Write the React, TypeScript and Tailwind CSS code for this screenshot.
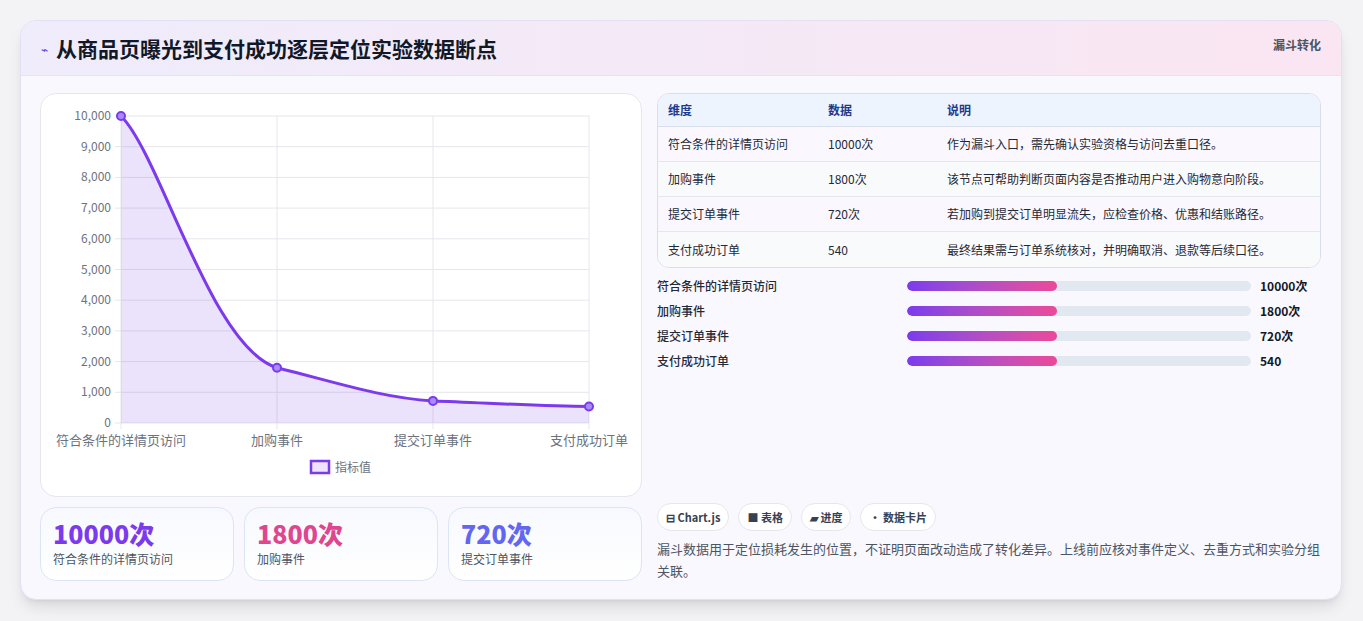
import React from "react";

const F = { fontFamily: '"Noto Sans CJK SC", "Noto Sans", sans-serif' };

const rows = [
  ["符合条件的详情页访问", "10000次", "作为漏斗入口，需先确认实验资格与访问去重口径。"],
  ["加购事件", "1800次", "该节点可帮助判断页面内容是否推动用户进入购物意向阶段。"],
  ["提交订单事件", "720次", "若加购到提交订单明显流失，应检查价格、优惠和结账路径。"],
  ["支付成功订单", "540", "最终结果需与订单系统核对，并明确取消、退款等后续口径。"],
];

function Chart() {
  const X0 = 80, X1 = 548, Y0 = 22, Y1 = 329;
  const yv = (v: number) => Y1 - (v / 10000) * (Y1 - Y0);
  const xs = [80, 236, 392, 548];
  const vals = [10000, 1800, 720, 540];
  const ys = vals.map(yv);
  const line = `M${xs[0]},${ys[0]} C120,${ys[0] + 40} 170,${ys[1] - 20} ${xs[1]},${ys[1]} C290,${ys[2] - 20} 340,${ys[2] - 3} ${xs[2]},${ys[2]} C440,${ys[3] - 4} 500,${ys[3]} ${xs[3]},${ys[3]}`;
  const ticks = [0, 1000, 2000, 3000, 4000, 5000, 6000, 7000, 8000, 9000, 10000];
  return (
    <svg width="600" height="401" className="block">
      {ticks.map((t) => (
        <g key={t}>
          <line x1={X0 - 6} x2={X1} y1={yv(t)} y2={yv(t)} stroke="#e5e7eb" />
          <text x={X0 - 10} y={yv(t) + 4} textAnchor="end" fontSize="12" fill="#6b7280" style={F}>
            {t.toLocaleString("en-US")}
          </text>
        </g>
      ))}
      {xs.map((x) => (
        <line key={x} x1={x} x2={x} y1={Y0} y2={Y1 + 6} stroke="#e5e7eb" />
      ))}
      <path d={`${line} L${X1},${Y1} L${X0},${Y1} Z`} fill="#7c3aed" fillOpacity="0.15" />
      <path d={line} fill="none" stroke="#7c3aed" strokeWidth="3" />
      {xs.map((x, i) => (
        <circle key={x} cx={x} cy={ys[i]} r="4" fill="#a78bfa" stroke="#7c3aed" strokeWidth="2" />
      ))}
      {["符合条件的详情页访问", "加购事件", "提交订单事件", "支付成功订单"].map((l, i) => (
        <text key={l} x={xs[i]} y={351} textAnchor="middle" fontSize="13" fill="#6b7280" style={F}>
          {l}
        </text>
      ))}
      <rect x="270" y="367" width="18" height="12" fill="#ede4fb" stroke="#7c3aed" strokeWidth="2.5" />
      <text x="294" y="378" fontSize="12" fill="#6b7280" style={F}>指标值</text>
    </svg>
  );
}

export default function App() {
  return (
    <div className="min-h-[621px] bg-[#f3f3f6] pt-5 px-5" style={F}>
      <div className="w-[1322px] h-[580px] rounded-2xl bg-[#f9f8fe] border border-[#e2e0f3] overflow-hidden shadow-lg">
        <div className="h-[55px] bg-gradient-to-r from-[#efecfb] to-[#fae6f2] border-b border-[#e6e3f5] flex items-start justify-between px-5">
          <div className="flex items-center gap-2 mt-[12px]">
            <span className="text-[#4f46e5] text-xs">⌁</span>
            <span className="text-[21px] font-bold text-[#111827]">从商品页曝光到支付成功逐层定位实验数据断点</span>
          </div>
          <span className="text-[12px] font-bold text-[#4b5563] mt-[15px]">漏斗转化</span>
        </div>
        <div className="flex gap-[15px] pl-[19px] pr-5 pt-[17px]">
          <div className="w-[602px] flex flex-col gap-[10px]">
            <div className="h-[404px] rounded-2xl bg-white border border-[#e5e7eb]">
              <Chart />
            </div>
            <div className="grid grid-cols-3 gap-[10px]">
              {[
                ["10000次", "符合条件的详情页访问", "text-[#7c3aed]"],
                ["1800次", "加购事件", "text-[#e0468f]"],
                ["720次", "提交订单事件", "text-[#6366f1]"],
              ].map(([v, l, c]) => (
                <div key={l} className="h-[74px] rounded-2xl border border-[#dbe5f3] bg-gradient-to-b from-[#f7f9fe] to-white px-[12px] pt-[10px]">
                  <div className={`text-[25px] font-extrabold leading-[30px] ${c}`}>{v}</div>
                  <div className="text-[12px] text-[#4b5563] mt-[2px]">{l}</div>
                </div>
              ))}
            </div>
          </div>
          <div className="w-[666px] flex flex-col">
            <div className="rounded-xl border border-[#d8deea] overflow-hidden bg-white">
              <div className="grid grid-cols-[160px_119px_1fr] h-[33px] items-center bg-[#edf4fe] border-b border-[#d8deea] px-[10px] text-[12px] font-bold text-[#1e3a8a]">
                <span>维度</span><span>数据</span><span>说明</span>
              </div>
              {rows.map((r, i) => (
                <div key={r[0]} className={`grid grid-cols-[160px_119px_1fr] h-[35px] items-center px-[10px] text-[12px] text-[#1f2937] ${i < 3 ? "border-b border-[#e5e7eb]" : ""} ${i % 2 ? "bg-[#f9fafb]" : "bg-[#faf8fe]"}`}>
                  <span>{r[0]}</span><span>{r[1]}</span><span>{r[2]}</span>
                </div>
              ))}
            </div>
            <div className="flex flex-col gap-[6px] mt-[8px]">
              {rows.map((r) => (
                <div key={r[0]} className="flex items-center h-[19px] text-[12px]">
                  <span className="w-[250px] font-medium text-[#1f2937]">{r[0]}</span>
                  <div className="w-[344px] h-[10px] rounded-full bg-[#e2e8f0] overflow-hidden">
                    <div className="w-[150px] h-full rounded-full bg-gradient-to-r from-[#7c3aed] to-[#ec4899]" />
                  </div>
                  <span className="ml-[9px] font-bold text-[#111827]">{r[1]}</span>
                </div>
              ))}
            </div>
            <div className="flex gap-[9px] mt-[133px]">
              {["⊟ Chart.js", "■ 表格", "▰ 进度", "• 数据卡片"].map((c) => (
                <span key={c} className="h-[28px] px-[8px] rounded-full border border-[#e5e7eb] bg-white flex items-center text-[11px] font-bold text-[#374151]">{c}</span>
              ))}
            </div>
            <p className="mt-[7px] text-[13px] leading-[22px] text-[#4b5563]">
              漏斗数据用于定位损耗发生的位置，不证明页面改动造成了转化差异。上线前应核对事件定义、去重方式和实验分组关联。
            </p>
          </div>
        </div>
      </div>
    </div>
  );
}
